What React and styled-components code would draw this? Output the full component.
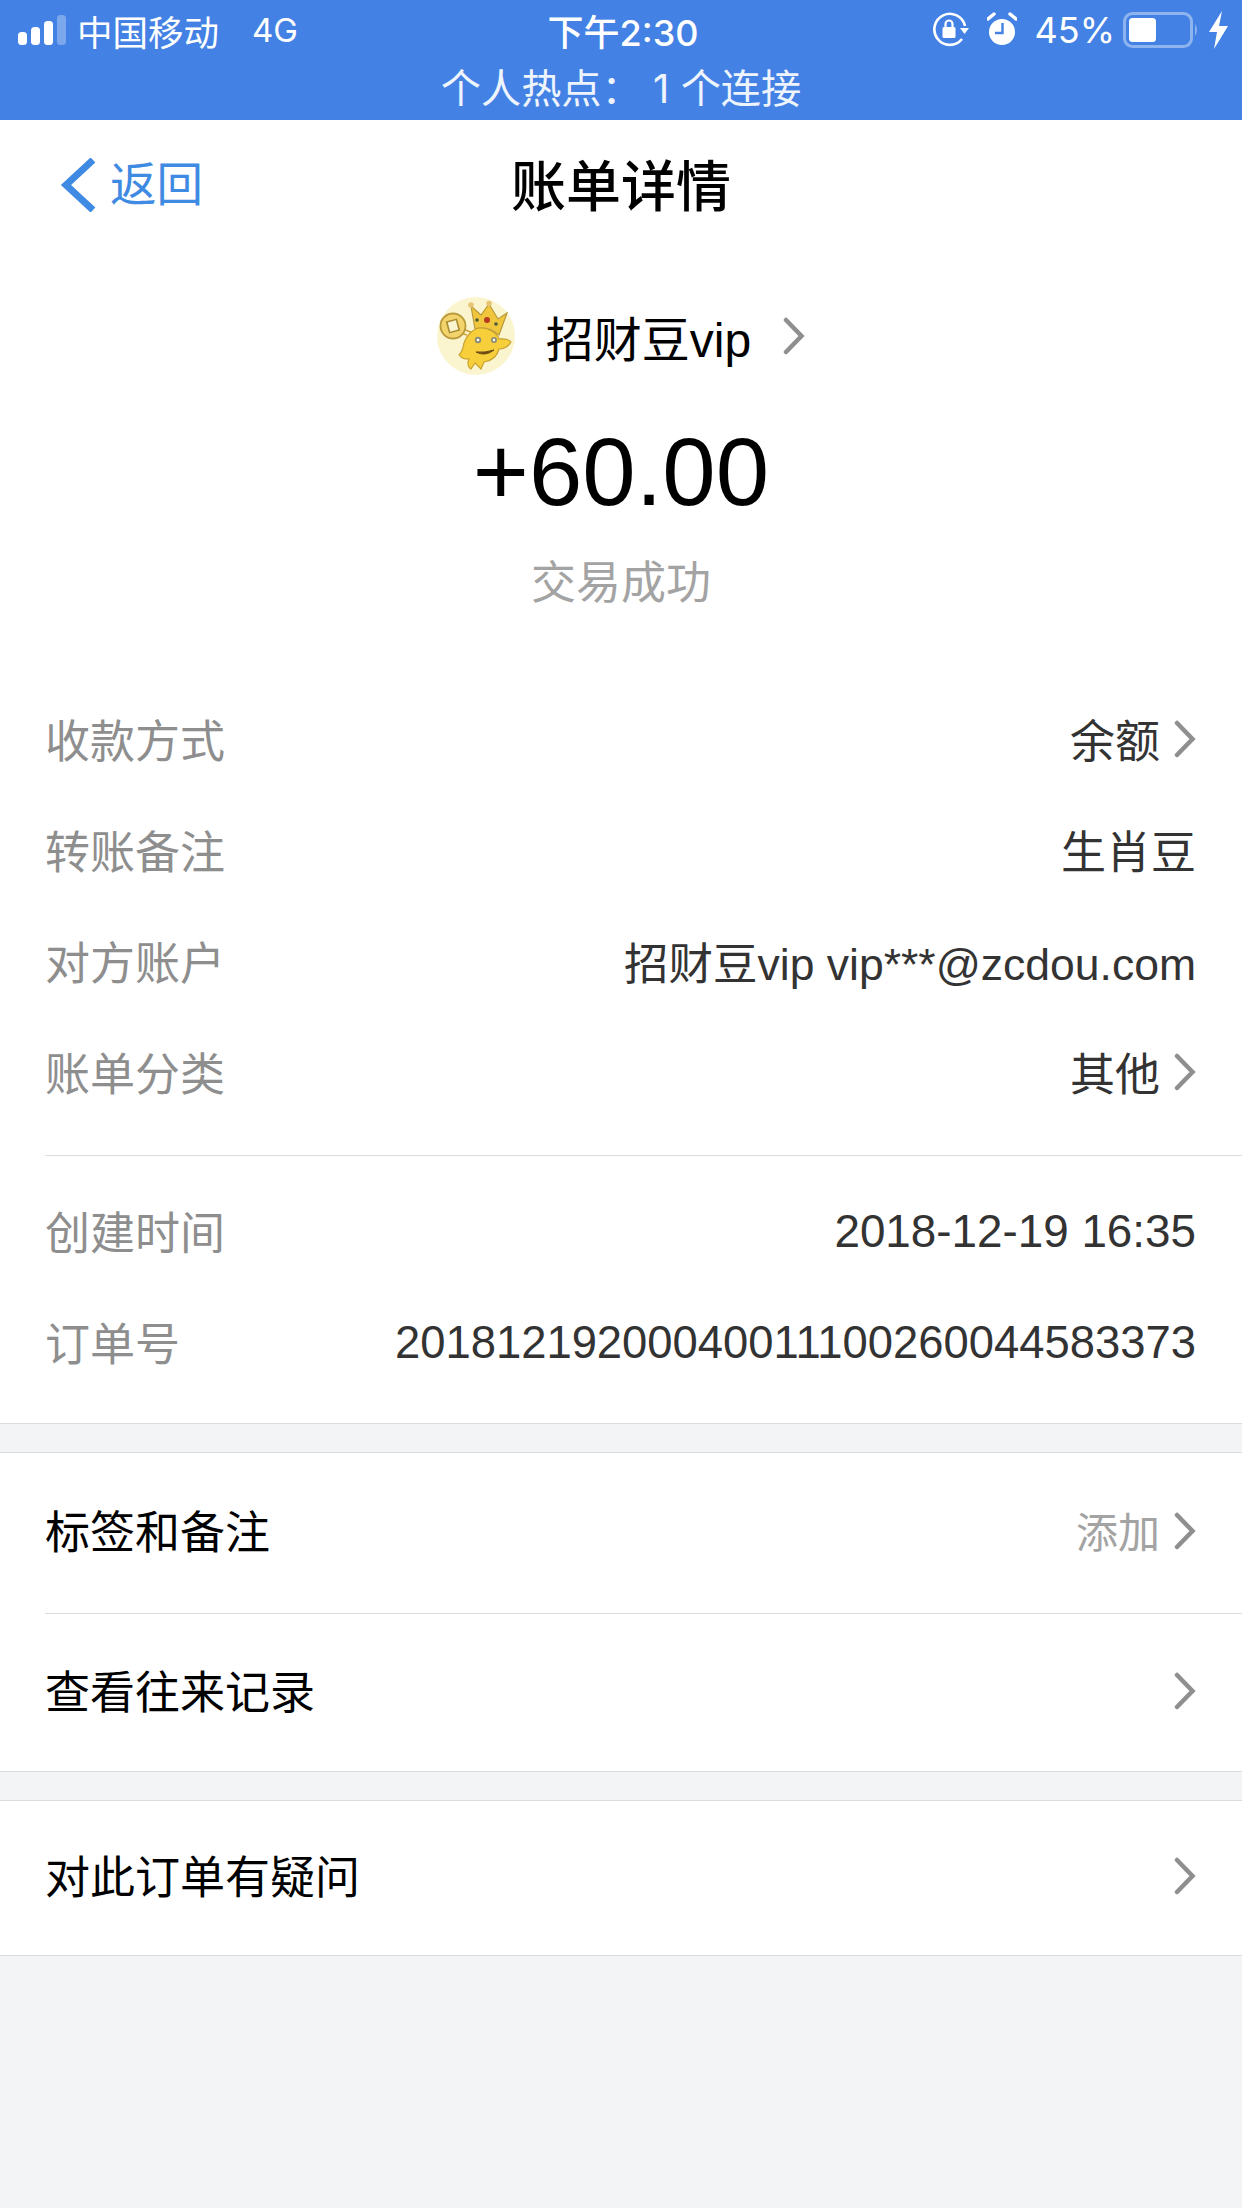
import React from "react";
import styled, { createGlobalStyle } from "styled-components";

const GlobalStyle = createGlobalStyle`
  html, body { margin: 0; padding: 0; background: #f3f4f6; }
  body { font-family: "Liberation Sans", "Noto Sans CJK SC", sans-serif; }
  * { box-sizing: border-box; }
`;

const Page = styled.div`
  width: 1242px;
  height: 2208px;
  background: #f3f4f6;
  overflow: hidden;
`;

const StatusBar = styled.div`
  height: 120px;
  background: #4382e4;
  color: #fff;
  font-family: Inter, "Noto Sans CJK SC", sans-serif;
`;

const StatusTop = styled.div`
  height: 60px;
  padding: 0 14px 0 18px;
  display: grid;
  grid-template-columns: 1fr auto 1fr;
  align-items: center;
`;

const StatusLeft = styled.div`
  display: flex;
  align-items: center;
  font-size: 35.5px;
`;

const Carrier = styled.span`
  margin-left: 11px;
`;

const Network = styled.span`
  margin-left: 33px;
  font-size: 33px;
`;

const Clock = styled.div`
  font-size: 36px;
  font-weight: 500;
`;

const StatusRight = styled.div`
  display: flex;
  align-items: center;
  justify-content: flex-end;
  font-size: 36px;
`;

const Percent = styled.span`
  margin: 0 8px 0 18px;
`;

const Hotspot = styled.div`
  text-align: center;
  font-size: 40.2px;
  line-height: 44px;
  margin-top: 7px;
  color: #eef4fd;
`;

const Sheet = styled.div`
  background: #fff;
  border-bottom: 1px solid #dcdcdc;
`;

const NavBar = styled.div`
  height: 132px;
  padding-bottom: 8px;
  position: relative;
  display: flex;
  align-items: center;
  justify-content: center;
`;

const BackLink = styled.div`
  position: absolute;
  left: 60px;
  top: 38px;
  display: flex;
  align-items: center;
  gap: 14px;
  color: #3f8ae2;
  font-size: 46.5px;
  line-height: 54px;
`;

const Title = styled.div`
  font-size: 55px;
  font-weight: 500;
  color: #000;
`;

const Merchant = styled.div`
  display: flex;
  align-items: center;
  justify-content: center;
  margin-top: 45px;
  height: 78px;
`;

const MerchantName = styled.span`
  font-size: 48px;
  color: #000;
  margin: 0 32px 0 31px;
`;

const Amount = styled.div`
  text-align: center;
  font-size: 96px;
  line-height: 110px;
  margin-top: 42px;
  color: #000;
`;

const Status = styled.div`
  text-align: center;
  font-size: 45px;
  line-height: 52px;
  margin-top: 31px;
  color: #a3a3a3;
`;

const DetailGroup = styled.div`
  padding: ${(p) => p.$pad};
  margin-left: 45px;
  border-bottom: ${(p) => (p.$line ? "1px solid #dcdcdc" : "none")};
`;

const DetailRow = styled.div`
  height: 111px;
  padding-right: 46px;
  display: flex;
  align-items: center;
  justify-content: space-between;
`;

const Label = styled.span`
  font-size: 45px;
  color: #8e8e8e;
`;

const Value = styled.span`
  font-size: ${(p) => p.$size || 45}px;
  margin-top: ${(p) => p.$drop || 0}px;
  color: #333;
  display: flex;
  align-items: center;
  gap: 14px;
`;

const Band = styled.div`
  height: 28px;
  background: #f3f4f6;
`;

const Section = styled.div`
  background: #fff;
  border-top: 1px solid #dcdcdc;
  border-bottom: 1px solid #dcdcdc;
`;

const ActionRow = styled.div`
  height: ${(p) => p.$h}px;
  margin-left: 45px;
  padding: 0 46px 6px 0;
  display: flex;
  align-items: center;
  justify-content: space-between;
  border-bottom: ${(p) => (p.$line ? "1px solid #dcdcdc" : "none")};
`;

const ActionLabel = styled.span`
  font-size: 45px;
  color: #000;
`;

const Hint = styled.span`
  font-size: 42px;
  color: #a3a3a3;
  display: flex;
  align-items: center;
  gap: 14px;
`;

const ChevronIcon = styled.svg`
  margin-top: ${(p) => p.$drop || 0}px;
`;

function Chevron({ drop }) {
  return (
    <ChevronIcon $drop={drop} width="22" height="38" viewBox="0 0 22 38">
      <path d="M3 3 L18.5 19 L3 35" fill="none" stroke="#8f8f8f" strokeWidth="4.5" strokeLinecap="round" strokeLinejoin="miter" />
    </ChevronIcon>
  );
}

function BackChevron() {
  return (
    <svg width="36" height="54" viewBox="0 0 36 54">
      <path d="M33 2 L6 27 L33 52" fill="none" stroke="#3f8ae2" strokeWidth="7" />
    </svg>
  );
}

function Signal() {
  return (
    <svg width="48" height="30" viewBox="0 0 48 30">
      <rect x="0" y="17" width="9" height="13" rx="3.5" fill="#fff" />
      <rect x="13" y="12" width="9" height="18" rx="3.5" fill="#fff" />
      <rect x="26" y="6" width="9" height="24" rx="3.5" fill="#fff" />
      <rect x="39" y="0" width="9" height="30" rx="3.5" fill="#fff" opacity="0.3" />
    </svg>
  );
}

function RotationLock() {
  return (
    <svg width="36" height="36" viewBox="0 0 36 36">
      <path d="M29 27 A15.5 15.5 0 1 1 32 14" fill="none" stroke="#fff" strokeWidth="2.6" />
      <path d="M27 16 L36 16 L31.5 22 Z" fill="#fff" />
      <rect x="9.5" y="15" width="13" height="11" rx="1.5" fill="#fff" />
      <path d="M12.5 15 V12 a3.5 3.5 0 0 1 7 0 V15" fill="none" stroke="#fff" strokeWidth="2.2" />
    </svg>
  );
}

const AlarmIcon = styled.svg`
  margin-left: 18px;
`;

function Alarm() {
  return (
    <AlarmIcon width="30" height="36" viewBox="0 0 30 36">
      <circle cx="15" cy="20" r="13" fill="#fff" />
      <path d="M1 7 L7 2 M29 7 L23 2" stroke="#fff" strokeWidth="3.5" strokeLinecap="round" />
      <path d="M15.5 11 V21 H8" fill="none" stroke="#4382e4" strokeWidth="2.4" />
    </AlarmIcon>
  );
}

function Battery() {
  return (
    <svg width="78" height="36" viewBox="0 0 78 36">
      <rect x="1.5" y="1.5" width="67" height="33" rx="8" fill="none" stroke="#fff" strokeOpacity="0.4" strokeWidth="3" />
      <rect x="6" y="6" width="27" height="24" rx="3.5" fill="#fff" />
      <path d="M72 12 Q76 18 72 24 Z" fill="#fff" fillOpacity="0.4" />
    </svg>
  );
}

const BoltIcon = styled.svg`
  margin-left: 8px;
`;

function Bolt() {
  return (
    <BoltIcon width="19" height="38" viewBox="0 0 19 38">
      <path d="M13 0 L0 21 H8 L5 38 L19 15 H10 Z" fill="#fff" />
    </BoltIcon>
  );
}

function Avatar() {
  return (
    <svg width="78" height="78" viewBox="0 0 78 78">
      <circle cx="39" cy="39" r="39" fill="#fbf5cf" />
      <path d="M20 35 L30 38 M26 32 L36 36" stroke="#c9a032" strokeWidth="1.4" />
      <circle cx="16" cy="29" r="12.5" fill="#f3d46c" stroke="#b99a3a" strokeWidth="1.8" />
      <rect x="11" y="23.5" width="10" height="11" fill="#fbf5cf" stroke="#a88a30" strokeWidth="1.6" transform="rotate(-15 16 29)" />
      <path d="M38 32 L34 9 L44 18 L52 7 L61 22 L70 16 L62 38 Q50 28 38 32 Z" fill="#f0c63c" stroke="#b99a3a" strokeWidth="1.2" />
      <circle cx="34" cy="8" r="2.8" fill="#e7c574" />
      <circle cx="52" cy="6.5" r="2.8" fill="#e7c574" />
      <circle cx="40" cy="23" r="1.8" fill="#4c5a3a" />
      <circle cx="50" cy="23" r="3" fill="#b53a20" />
      <circle cx="59" cy="27" r="1.8" fill="#4c5a3a" />
      <path d="M44 31 C52 31 60 36 62 42 C66 42 71 41 74 45 C71 50 66 52 62 52 C60 60 54 64 47 65 L44 72 L38 66 L34 72 C31 70 30 66 32 62 C28 62 25 62 22 58 C26 54 26 50 27 46 C30 38 36 31 44 31 Z" fill="#f6cf3a" stroke="#c9a032" strokeWidth="1.2" />
      <circle cx="41" cy="43" r="3.2" fill="#8d8d78" />
      <circle cx="41" cy="43" r="1.3" fill="#fff" />
      <circle cx="57" cy="43" r="3" fill="#8d8d78" />
      <circle cx="57" cy="43" r="1.2" fill="#fff" />
      <path d="M39 55 Q48 60 57 53 Q48 56 39 55 Z" fill="#6b4a14" stroke="#6b4a14" strokeWidth="1" />
    </svg>
  );
}

export default function App() {
  return (
    <Page>
      <GlobalStyle />
      <StatusBar>
        <StatusTop>
          <StatusLeft>
            <Signal />
            <Carrier>中国移动</Carrier>
            <Network>4G</Network>
          </StatusLeft>
          <Clock>下午2:30</Clock>
          <StatusRight>
            <RotationLock />
            <Alarm />
            <Percent>45%</Percent>
            <Battery />
            <Bolt />
          </StatusRight>
        </StatusTop>
        <Hotspot>个人热点： 1 个连接</Hotspot>
      </StatusBar>
      <Sheet>
        <NavBar>
          <BackLink>
            <BackChevron />
            返回
          </BackLink>
          <Title>账单详情</Title>
        </NavBar>
        <Merchant>
          <Avatar />
          <MerchantName>招财豆vip</MerchantName>
          <Chevron />
        </Merchant>
        <Amount>+60.00</Amount>
        <Status>交易成功</Status>
        <DetailGroup $pad="72.5px 0 28px" $line>
          <DetailRow>
            <Label>收款方式</Label>
            <Value>余额<Chevron drop={2} /></Value>
          </DetailRow>
          <DetailRow>
            <Label>转账备注</Label>
            <Value>生肖豆</Value>
          </DetailRow>
          <DetailRow>
            <Label>对方账户</Label>
            <Value $size={44.5}>招财豆vip vip***@zcdou.com</Value>
          </DetailRow>
          <DetailRow>
            <Label>账单分类</Label>
            <Value>其他<Chevron drop={2} /></Value>
          </DetailRow>
        </DetailGroup>
        <DetailGroup $pad="19px 0 26px">
          <DetailRow>
            <Label>创建时间</Label>
            <Value $size={45.8} $drop={3}>2018-12-19 16:35</Value>
          </DetailRow>
          <DetailRow>
            <Label>订单号</Label>
            <Value $size={45.4} $drop={3}>20181219200040011100260044583373</Value>
          </DetailRow>
        </DetailGroup>
      </Sheet>
      <Band />
      <Section>
        <ActionRow $h={161} $line>
          <ActionLabel>标签和备注</ActionLabel>
          <Hint>添加<Chevron drop={3} /></Hint>
        </ActionRow>
        <ActionRow $h={157}>
          <ActionLabel>查看往来记录</ActionLabel>
          <Chevron drop={3} />
        </ActionRow>
      </Section>
      <Band />
      <Section>
        <ActionRow $h={154}>
          <ActionLabel>对此订单有疑问</ActionLabel>
          <Chevron drop={3} />
        </ActionRow>
      </Section>
    </Page>
  );
}
